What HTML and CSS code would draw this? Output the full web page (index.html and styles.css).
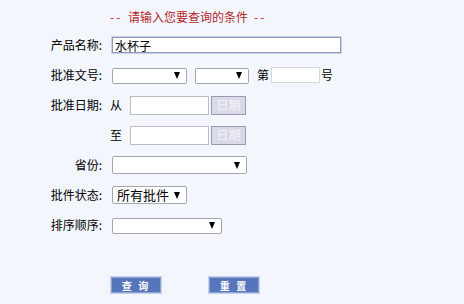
FILE: index.html
```html
<!DOCTYPE html>
<html lang="zh-CN">
<head>
<meta charset="utf-8">
<title>查询</title>
<link rel="stylesheet" href="styles.css">
</head>
<body>
<div class="page">
  <div class="title"><span class="dash">--</span>请输入您要查询的条件<span class="dash dash-end">--</span></div>
  <div class="form">
    <div class="label">产品名称:</div>
    <div class="field"><input class="text name" type="text" value="水杯子"></div>

    <div class="label">批准文号:</div>
    <div class="field">
      <span class="sel w75"><select><option></option></select></span>
      <span class="sel w54 ml8"><select><option></option></select></span>
      <span class="word ml8">第</span>
      <input class="text num" type="text">
      <span class="word">号</span>
    </div>

    <div class="label">批准日期:</div>
    <div class="field">
      <span class="word from">从</span>
      <input class="text date" type="text">
      <button class="datebtn" type="button">日期</button>
    </div>

    <div class="label"></div>
    <div class="field">
      <span class="word from">至</span>
      <input class="text date" type="text">
      <button class="datebtn" type="button">日期</button>
    </div>

    <div class="label">省份:</div>
    <div class="field"><span class="sel w135 h18"><select><option></option></select></span></div>

    <div class="label">批件状态:</div>
    <div class="field"><span class="sel w75 h18"><select><option>所有批件</option></select></span></div>

    <div class="label">排序顺序:</div>
    <div class="field"><span class="sel w110"><select><option></option></select></span></div>
  </div>
  <div class="actions">
    <button class="act" type="button">查 询</button>
    <button class="act" type="button">重 置</button>
  </div>
</div>
</body>
</html>
```

FILE: styles.css
```css
html, body {
  margin: 0;
  padding: 0;
  background: #f3f6fc;
}
body {
  font-family: "Noto Sans CJK SC", "Noto Sans", sans-serif;
  font-size: 12px;
  color: #000;
  width: 464px;
  height: 304px;
  overflow: hidden;
}
.page {
  padding-top: 8px;
}
.title {
  display: flex;
  padding-left: 110px;
  height: 22px;
  line-height: 18px;
  color: #b3262c;
  font-size: 12px;
}
.dash {
  letter-spacing: 2px;
  width: 18px;
}
.dash-end {
  margin-left: 6px;
}
.form {
  display: grid;
  grid-template-columns: 102px 1fr;
  column-gap: 8px;
  grid-auto-rows: 30px;
  align-items: center;
}
.label {
  text-align: right;
  line-height: 16px;
}
.field {
  display: flex;
  align-items: center;
  height: 30px;
}
.word {
  line-height: 16px;
}
.ml8 { margin-left: 8px; }
.from { margin-right: 8px; width: 12px; }

.text {
  box-sizing: border-box;
  margin: 0;
  padding: 0 2px;
  background: #fff;
  border: 1px solid #b9bcc4;
  font: 12px "Noto Sans CJK SC", "Noto Sans", sans-serif;
  color: #000;
  outline: none;
}
.name {
  margin-left: 2px;
  width: 229px;
  height: 16px;
  line-height: 14px;
  border-color: #8f9bb9;
  box-shadow: 0 0 0 1px #c8d2e8;
}
.num {
  margin-left: 2px;
  margin-right: 1px;
  width: 49px;
  height: 16px;
  border-color: #d4d7de;
}
.date {
  width: 79px;
  height: 19px;
}
.datebtn {
  box-sizing: border-box;
  margin: 0 0 0 2px;
  width: 35px;
  height: 19px;
  padding: 0;
  background: #d9d9e7;
  border: 1px solid #9b9bb5;
  color: #f4f4f9;
  font: 12px "Noto Sans CJK SC", sans-serif;
  line-height: 16px;
}

.sel {
  position: relative;
  display: inline-block;
  margin-left: 2px;
  height: 16px;
}
.sel.ml8 { margin-left: 8px; }
.sel select {
  -webkit-appearance: none;
  appearance: none;
  box-sizing: border-box;
  width: 100%;
  height: 100%;
  margin: 0;
  padding: 0 14px 0 4px;
  background: #fff;
  border: 1px solid #a4a7ae;
  border-radius: 2px;
  font: 12px "Noto Sans CJK SC", sans-serif;
  color: #000;
  line-height: 14px;
  outline: none;
}
.sel::after {
  content: "";
  position: absolute;
  right: 7px;
  top: 50%;
  margin-top: -3px;
  width: 0;
  height: 0;
  border-left: 3.5px solid transparent;
  border-right: 3.5px solid transparent;
  border-top: 7px solid #000;
}
.w75 { width: 75px; }
.w54 { width: 54px; }
.w135 { width: 135px; }
.w110 { width: 110px; }
.sel.h18 { height: 18px; }
.sel.h18 select { font-size: 13px; }

.actions {
  display: flex;
  gap: 48px;
  padding-left: 111px;
  margin-top: 37px;
}
.act {
  box-sizing: border-box;
  width: 50px;
  height: 16px;
  margin: 0;
  padding: 0;
  background: #5675bb;
  border: 1px solid #8ea3d6;
  box-shadow: 0 0 0 1px #c4cfe9;
  color: #fff;
  font: bold 10px "Noto Sans CJK SC", sans-serif;
  line-height: 13px;
  letter-spacing: 2px;
}
```
